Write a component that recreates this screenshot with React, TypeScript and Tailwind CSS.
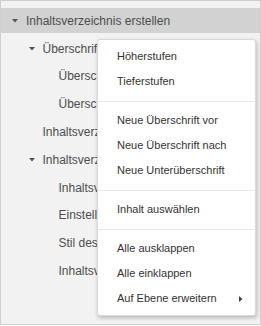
import React from "react";

type Row = { level: number; text: string; caret?: boolean; active?: boolean };

const rows: Row[] = [
  { level: 0, text: "Inhaltsverzeichnis erstellen", caret: true, active: true },
  { level: 1, text: "Überschriften", caret: true },
  { level: 2, text: "Überschrift 1" },
  { level: 2, text: "Überschrift 2" },
  { level: 1, text: "Inhaltsverzeichnis einfügen" },
  { level: 1, text: "Inhaltsverzeichnis bearbeiten", caret: true },
  { level: 2, text: "Inhaltsverzeichnis aktualisieren" },
  { level: 2, text: "Einstellungen" },
  { level: 2, text: "Stil des Inhaltsverzeichnisses" },
  { level: 2, text: "Inhaltsverzeichnis löschen" },
];

const padFor = ["pl-[25px]", "pl-[41.5px]", "pl-[57.5px]"];

function Caret() {
  return (
    <svg width="6" height="4" viewBox="0 0 6 4" className="absolute left-[-14px] top-[11px]">
      <path d="M0 0 H6 L3 3.5 Z" fill="#555" />
    </svg>
  );
}

const Item = ({ children, arrow }: { children: React.ReactNode; arrow?: boolean }) => (
  <div className="h-[25px] flex items-center pl-[19px] pr-[12px] justify-between">
    <span>{children}</span>
    {arrow && (
      <svg width="4" height="6" viewBox="0 0 4 6" className="mt-[1px]">
        <path d="M0 0 L3.5 3 L0 6 Z" fill="#444" />
      </svg>
    )}
  </div>
);

const Sep = () => <div className="mt-[7px] mb-[6px] h-px bg-[#e6e6e6]" />;

export default function App() {
  return (
    <div
      className="relative w-[261px] h-[325px] bg-[#f2f2f2] border border-[#cfcfcf] overflow-hidden"
      style={{ fontFamily: '"Liberation Sans", Arial, sans-serif' }}
    >
      <div className="pt-[6px]">
        {rows.map((r, i) => (
          <div key={i} className="h-[27.8px] flex items-center">
            <div
              className={`h-[25px] flex items-center ${r.active ? "w-full bg-[#d2d2d2]" : "w-[96px] overflow-hidden"} ${padFor[r.level]}`}
            >
              <div className="relative h-[25px] flex items-center text-[12px] text-[#4d4d4d] whitespace-nowrap">
                {r.caret && <Caret />}
                {r.text}
              </div>
            </div>
          </div>
        ))}
      </div>

      <div className="absolute left-[96px] top-[38px] w-[159px] h-[277px] bg-white border border-[#d9d9d9] rounded-[3px] shadow-[1px_2px_4px_rgba(0,0,0,0.25)] py-[4px] text-[11px] text-[#333]">
        <Item>Höherstufen</Item>
        <Item>Tieferstufen</Item>
        <Sep />
        <Item>Neue Überschrift vor</Item>
        <Item>Neue Überschrift nach</Item>
        <Item>Neue Unterüberschrift</Item>
        <Sep />
        <Item>Inhalt auswählen</Item>
        <Sep />
        <Item>Alle ausklappen</Item>
        <Item>Alle einklappen</Item>
        <Item arrow>Auf Ebene erweitern</Item>
      </div>
    </div>
  );
}
